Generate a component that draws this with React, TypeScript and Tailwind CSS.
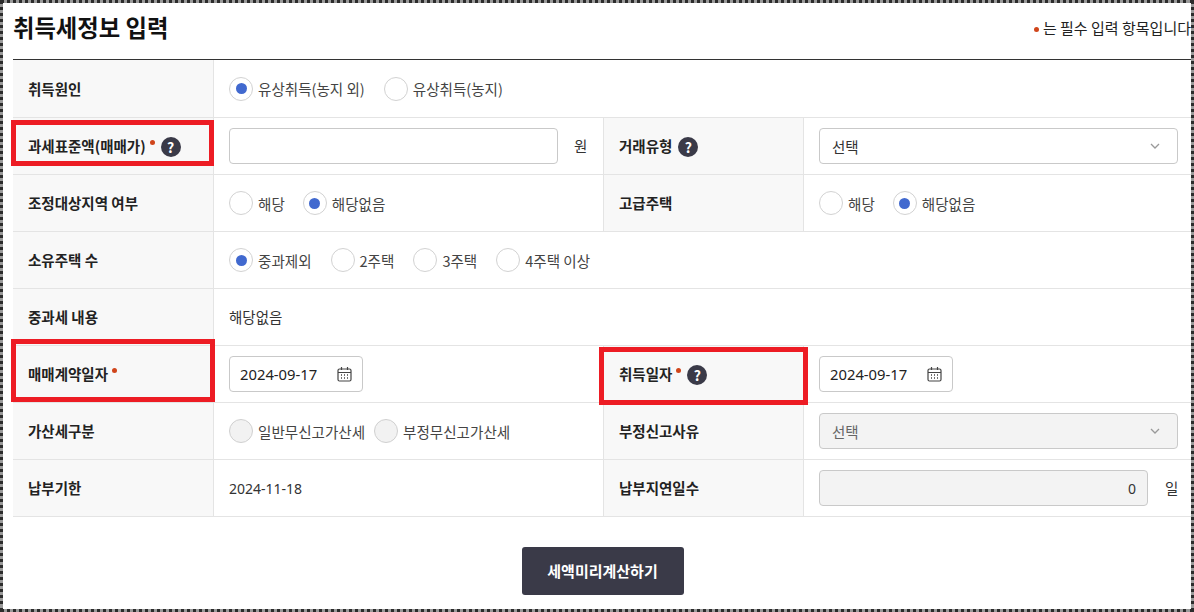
import React from "react";

const FONT = "font-['Noto_Sans_CJK_KR','Noto_Sans',sans-serif]";

function Radio({ label, checked, disabled }: { label: string; checked?: boolean; disabled?: boolean }) {
  return (
    <label className="flex items-center gap-[5px]">
      <span
        className={`flex h-6 w-6 items-center justify-center rounded-full border ${
          disabled ? "border-[#d0d0d0] bg-[#f2f2f2]" : "border-[#d2d2d2] bg-white"
        }`}
      >
        {checked && <span className="h-[11px] w-[11px] rounded-full bg-[#4169cf]" />}
      </span>
      <span className="mt-[1px] text-[14.55px] text-[#444]">{label}</span>
    </label>
  );
}

function Help() {
  return (
    <span className="mt-[2px] ml-[6px] flex h-5 w-5 shrink-0 items-center justify-center rounded-full bg-[#3a3a48] text-[14px] leading-none font-bold text-white">
      ?
    </span>
  );
}

function Req() {
  return <span className="mb-[8px] ml-[4px] h-[5px] w-[5px] shrink-0 rounded-full bg-[#d0451b]" />;
}

function Th({ children, bl }: { children: React.ReactNode; bl?: boolean }) {
  return (
    <div
      className={`flex items-center border-r border-b border-[#e4e4e4] bg-[#f8f8f8] pl-[15px] text-[14.5px] font-bold text-[#222] ${
        bl ? "border-l" : ""
      }`}
    >
      {children}
    </div>
  );
}

function Td({ children, span }: { children: React.ReactNode; span?: boolean }) {
  return (
    <div className={`flex items-center border-b border-[#e4e4e4] pl-[15px] ${span ? "col-span-3" : ""}`}>
      {children}
    </div>
  );
}

function Select({ disabled }: { disabled?: boolean }) {
  return (
    <div
      className={`flex h-9 w-[359px] items-center justify-between rounded-[4px] border border-[#c9c9c9] pr-[17px] pl-[12px] text-[14.5px] ${
        disabled ? "bg-[#f3f3f3] text-[#666]" : "bg-white text-[#333]"
      }`}
    >
      <span className="mt-[1px]">선택</span>
      <svg width="10" height="6" viewBox="0 0 10 6" fill="none" stroke="#999" strokeWidth="1.3">
        <path d="M1 1l4 4 4-4" />
      </svg>
    </div>
  );
}

function DateBox() {
  return (
    <div className="flex h-9 w-[134px] items-center justify-between rounded-[4px] border border-[#c9c9c9] bg-white pr-[10px] pl-[10px] font-['Noto_Sans','Noto_Sans_CJK_KR',sans-serif] text-[14.8px] text-[#222]">
      <span>2024-09-17</span>
      <svg width="15" height="16" viewBox="0 0 15 16" fill="none" stroke="#444" strokeWidth="1.2">
        <rect x="1" y="3" width="13" height="12" rx="1.5" />
        <path d="M1 6.5h13M4.5 1v3M10.5 1v3" />
        <path d="M4 9h1M7 9h1M10 9h1M4 12h1M7 12h1M10 12h1" strokeWidth="1.4" />
      </svg>
    </div>
  );
}

function RedBox({ className }: { className: string }) {
  return <div className={`pointer-events-none absolute border-[5px] border-[#ed1c24] ${className}`} />;
}

export default function App() {
  return (
    <div className={`relative h-[612px] w-[1194px] overflow-hidden border-[3px] border-dotted border-[#2c2c2c] bg-[#9a9a9a] ${FONT}`}>
      <div className="flex h-full flex-col bg-white pl-[10px]">
        <div className="flex h-[56px] items-center justify-between overflow-hidden">
          <h1 className="-mt-[6px] text-[23.3px] leading-none font-bold text-[#111]">취득세정보 입력</h1>
          <div className="-mt-[6px] flex items-center gap-[4px] text-[15px] whitespace-nowrap text-[#222]">
            <span className="mt-[2px] h-[5px] w-[5px] rounded-full bg-[#d0451b]" />
            <span>는 필수 입력 항목입니다</span>
          </div>
        </div>
        <div className="grid grid-cols-[201px_389px_201px_1fr] grid-rows-[58px] auto-rows-[57px] border-t border-[#333]">
          <Th>취득원인</Th>
          <Td span>
            <div className="flex gap-[19px]">
              <Radio label="유상취득(농지 외)" checked />
              <Radio label="유상취득(농지)" />
            </div>
          </Td>

          <Th>
            과세표준액(매매가)
            <Req />
            <Help />
          </Th>
          <Td>
            <div className="h-9 w-[329px] rounded-[4px] border border-[#c9c9c9] bg-white" />
            <span className="ml-[16px] text-[14.5px] text-[#333]">원</span>
          </Td>
          <Th bl>
            거래유형
            <Help />
          </Th>
          <Td>
            <Select />
          </Td>

          <Th>조정대상지역 여부</Th>
          <Td>
            <div className="flex gap-[18px]">
              <Radio label="해당" />
              <Radio label="해당없음" checked />
            </div>
          </Td>
          <Th bl>고급주택</Th>
          <Td>
            <div className="flex gap-[18px]">
              <Radio label="해당" />
              <Radio label="해당없음" checked />
            </div>
          </Td>

          <Th>소유주택 수</Th>
          <Td span>
            <div className="flex gap-[19px]">
              <Radio label="중과제외" checked />
              <Radio label="2주택" />
              <Radio label="3주택" />
              <Radio label="4주택 이상" />
            </div>
          </Td>

          <Th>중과세 내용</Th>
          <Td span>
            <span className="text-[14.5px] text-[#333]">해당없음</span>
          </Td>

          <Th>
            매매계약일자
            <Req />
          </Th>
          <Td>
            <DateBox />
          </Td>
          <Th bl>
            취득일자
            <Req />
            <Help />
          </Th>
          <Td>
            <DateBox />
          </Td>

          <Th>가산세구분</Th>
          <Td>
            <div className="flex gap-[9px]">
              <Radio label="일반무신고가산세" disabled />
              <Radio label="부정무신고가산세" disabled />
            </div>
          </Td>
          <Th bl>부정신고사유</Th>
          <Td>
            <Select disabled />
          </Td>

          <Th>납부기한</Th>
          <Td>
            <span className="font-['Noto_Sans',sans-serif] text-[14px] text-[#333]">2024-11-18</span>
          </Td>
          <Th bl>납부지연일수</Th>
          <Td>
            <div className="flex h-9 w-[329px] items-center justify-end rounded-[4px] border border-[#c9c9c9] bg-[#f3f3f3] pr-[11px] font-['Noto_Sans',sans-serif] text-[14px] text-[#333]">
              0
            </div>
            <span className="ml-[17px] text-[14.5px] text-[#333]">일</span>
          </Td>
        </div>
        <div className="flex justify-center pt-[30px] pl-[1px]">
          <button className="h-[48px] w-[162px] rounded-[3px] bg-[#3a3a48] text-[15px] font-bold text-white">
            세액미리계산하기
          </button>
        </div>
      </div>
      <RedBox className="top-[117px] left-[8px] h-[46px] w-[203px]" />
      <RedBox className="top-[336px] left-[8px] h-[63px] w-[204px]" />
      <RedBox className="top-[344px] left-[596px] h-[58px] w-[209px]" />
    </div>
  );
}
